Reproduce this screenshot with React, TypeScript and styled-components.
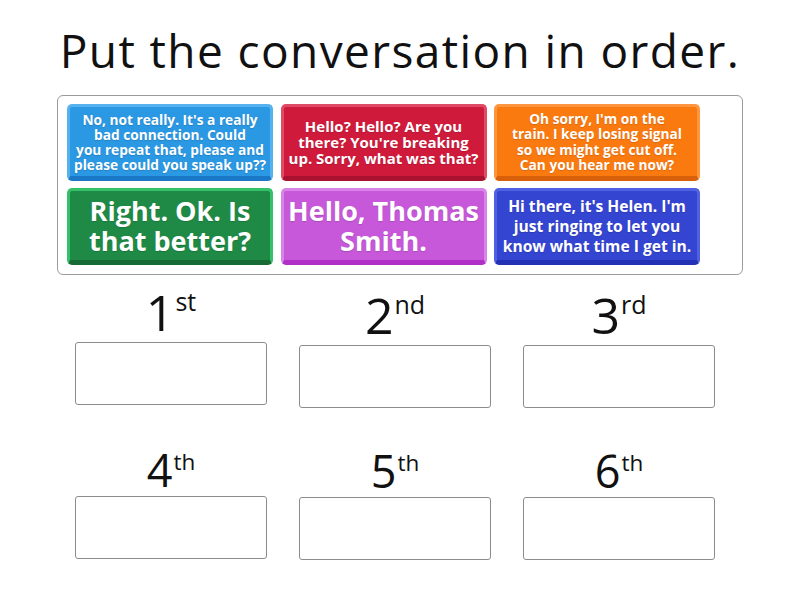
import React from "react";
import styled, { createGlobalStyle } from "styled-components";

const GlobalStyle = createGlobalStyle`
  html, body { margin: 0; padding: 0; background: #ffffff; }
  body { font-family: "Open Sans", "DejaVu Sans", sans-serif; color: #000; }
`;

const Page = styled.div`
  width: 800px;
  height: 600px;
  display: flex;
  flex-direction: column;
  align-items: center;
  overflow: hidden;
`;

const Title = styled.h1`
  margin: 23px 0 0;
  font-size: 46px;
  line-height: 54px;
  letter-spacing: 1.4px;
  font-weight: 400;
  text-align: center;
  color: #111;
`;

const Tray = styled.div`
  box-sizing: border-box;
  margin-top: 18px;
  width: 686px;
  height: 180px;
  border: 1px solid #9a9a9a;
  border-radius: 6px;
  padding: 8px 9px 9px;
  display: flex;
  flex-wrap: wrap;
  align-content: flex-start;
  gap: 7px 7.5px;
`;

const Tile = styled.div<{ $face: string; $light: string; $dark: string; $size: number; $lh: number }>`
  box-sizing: border-box;
  width: 206px;
  height: 77px;
  border-radius: 5px;
  background: ${(p) => p.$face};
  border: 3px solid ${(p) => p.$light};
  border-bottom: 5px solid ${(p) => p.$dark};
  display: flex;
  align-items: center;
  justify-content: center;
  text-align: center;
  color: #fff;
  font-weight: 700;
  font-size: ${(p) => p.$size}px;
  line-height: ${(p) => p.$lh}px;
  text-shadow: 0 1px 1px rgba(0, 0, 0, 0.15);
  white-space: nowrap;
`;

const Slots = styled.div`
  box-sizing: border-box;
  width: 686px;
  padding-left: 18px;
  margin-top: 15px;
  display: grid;
  grid-template-columns: repeat(3, 192px);
  column-gap: 32px;
  row-gap: 0;
`;

const Slot = styled.div<{ $lift: number; $top: number }>`
  display: flex;
  flex-direction: column;
  align-items: center;
  margin-top: ${(p) => p.$top - p.$lift}px;
  margin-bottom: ${(p) => p.$lift}px;
`;

const Label = styled.div<{ $size: number }>`
  font-size: ${(p) => p.$size}px;
  line-height: ${(p) => p.$size}px;
  font-weight: 400;
  color: #111;
  white-space: nowrap;
`;

const Suffix = styled.span<{ $raise: number }>`
  font-size: 0.5em;
  line-height: 0;
  vertical-align: ${(p) => p.$raise}px;
  margin-left: 1px;
`;

const DropBox = styled.div`
  box-sizing: border-box;
  margin-top: 4.5px;
  width: 192px;
  height: 63px;
  border: 1px solid #8c8c8c;
  border-radius: 3px;
  background: #fff;
`;

type TileDef = {
  lines: string[];
  face: string;
  light: string;
  dark: string;
  size: number;
  lh: number;
};

const tiles: TileDef[] = [
  {
    lines: ["No, not really. It's a really", "bad connection. Could", "you repeat that, please and", "please could you speak up??"],
    face: "#2b98e3",
    light: "#55b2ef",
    dark: "#1a78c6",
    size: 13.7,
    lh: 15,
  },
  {
    lines: ["Hello? Hello? Are you", "there? You're breaking", "up. Sorry, what was that?"],
    face: "#d01a3b",
    light: "#df4a66",
    dark: "#a8122e",
    size: 15,
    lh: 16,
  },
  {
    lines: ["Oh sorry, I'm on the", "train. I keep losing signal", "so we might get cut off.", "Can you hear me now?"],
    face: "#fb7a10",
    light: "#ff963f",
    dark: "#d9600b",
    size: 13.7,
    lh: 15.5,
  },
  {
    lines: ["Right. Ok. Is", "that better?"],
    face: "#1f8a46",
    light: "#35c06a",
    dark: "#176c36",
    size: 27,
    lh: 30,
  },
  {
    lines: ["Hello, Thomas", "Smith."],
    face: "#c758d9",
    light: "#d884e6",
    dark: "#b02fc6",
    size: 27,
    lh: 30,
  },
  {
    lines: ["Hi there, it's Helen. I'm", "just ringing to let you", "know what time I get in."],
    face: "#3445d2",
    light: "#4f60e2",
    dark: "#2332b4",
    size: 15.6,
    lh: 20,
  },
];

type SlotDef = { num: string; suf: string; size: number; raise: number; lift: number; top: number };

const slots: SlotDef[] = [
  { num: "1", suf: "st", size: 50, raise: 20, lift: 3, top: 0 },
  { num: "2", suf: "nd", size: 50, raise: 20, lift: 0, top: 0 },
  { num: "3", suf: "rd", size: 50, raise: 20, lift: 0, top: 0 },
  { num: "4", suf: "th", size: 45, raise: 17, lift: 1, top: 40 },
  { num: "5", suf: "th", size: 45, raise: 17, lift: 0, top: 40 },
  { num: "6", suf: "th", size: 45, raise: 17, lift: 0, top: 40 },
];

export default function App() {
  return (
    <>
      <GlobalStyle />
      <Page>
        <Title>Put the conversation in order.</Title>
        <Tray>
          {tiles.map((t, i) => (
            <Tile key={i} $face={t.face} $light={t.light} $dark={t.dark} $size={t.size} $lh={t.lh}>
              <div>
                {t.lines.map((l, j) => (
                  <React.Fragment key={j}>
                    {l}
                    {j < t.lines.length - 1 && <br />}
                  </React.Fragment>
                ))}
              </div>
            </Tile>
          ))}
        </Tray>
        <Slots>
          {slots.map((s, i) => (
            <Slot key={i} $lift={s.lift} $top={s.top}>
              <Label $size={s.size}>
                {s.num}
                <Suffix $raise={s.raise}>{s.suf}</Suffix>
              </Label>
              <DropBox />
            </Slot>
          ))}
        </Slots>
      </Page>
    </>
  );
}
